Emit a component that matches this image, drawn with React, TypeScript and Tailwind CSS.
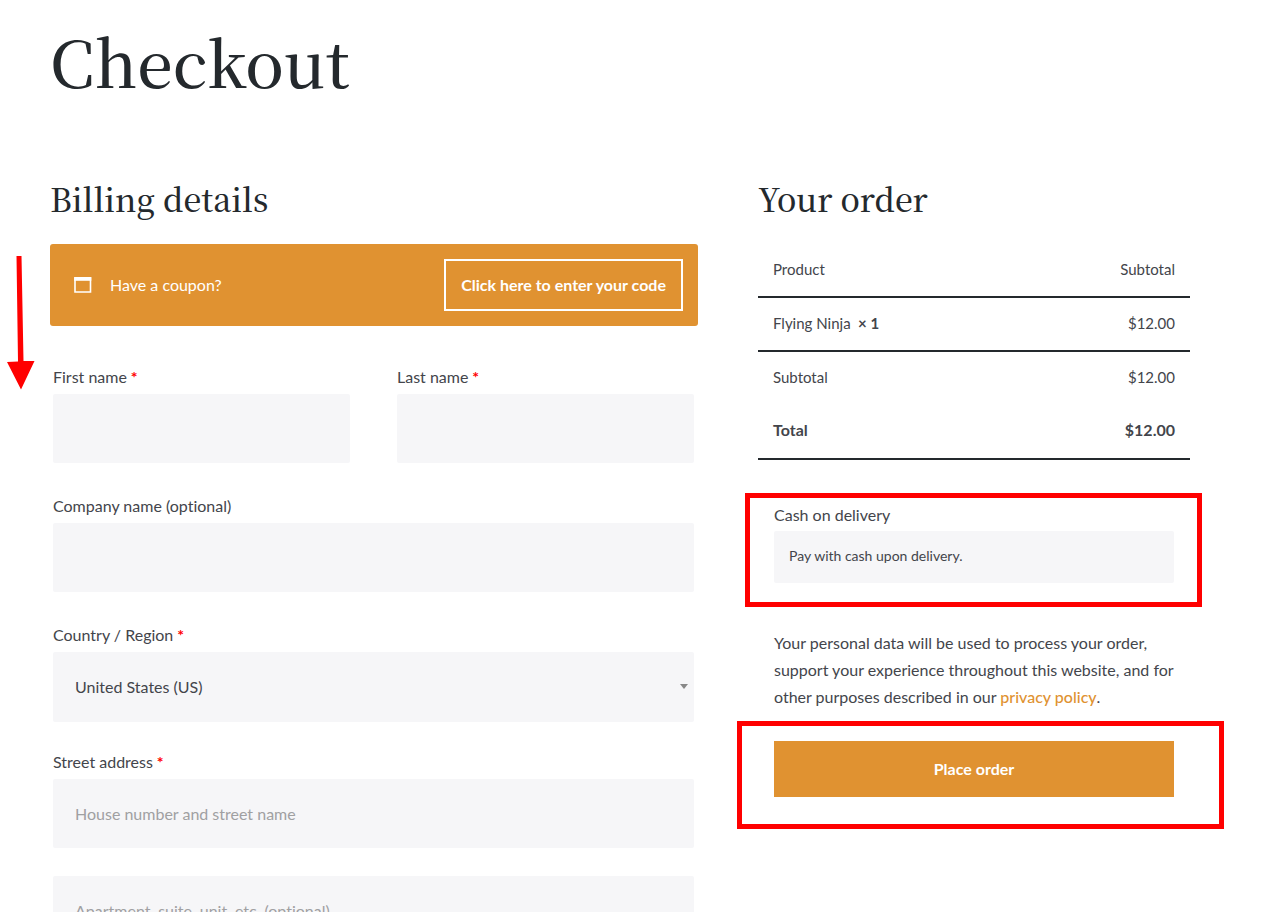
import type { ReactNode } from "react";

const inputClass =
  "block w-full rounded-xs bg-[#f6f6f8] px-[22px] text-base text-[#43454b] placeholder:text-[#a0a0a2] outline-none focus:ring-2 focus:ring-[#e09231]";

const headingClass =
  "font-['Source_Serif_Pro','Noto_Serif_CJK_SC','Liberation_Serif',serif] font-medium text-[#24292d]";

function Label({ id, required, children }: { id: string; required?: boolean; children: ReactNode }) {
  return (
    <label htmlFor={id} className="mb-1 block text-base leading-[26px]">
      {children}
      {required && <span className="font-bold text-[#ff0000]"> *</span>}
    </label>
  );
}

function Field({ id, label, required }: { id: string; label: string; required?: boolean }) {
  return (
    <div>
      <Label id={id} required={required}>{label}</Label>
      <input id={id} type="text" className={inputClass + " h-[69px]"} />
    </div>
  );
}

function CouponIcon() {
  return (
    <svg width="18" height="18" viewBox="0 0 18 18" fill="none" aria-hidden="true" className="shrink-0">
      <path d="M1 2h15.500v14H1z" stroke="white" strokeWidth="1.6" />
      <path d="M0.200 1h17.100v3.800H0.200z" fill="white" />
    </svg>
  );
}

function Arrow() {
  return (
    <svg width="30" height="136" viewBox="0 0 30 136" aria-hidden="true" className="pointer-events-none absolute top-[255px] left-1.5">
      <path d="M10.5 1h5l2 105h11L15 134.500 1 107l11-.5z" fill="#ff0000" />
    </svg>
  );
}

function Billing() {
  return (
    <section>
      <h2 className={headingClass + " text-[32px] leading-[50px]"}>Billing details</h2>
      <div className="mt-[21px] flex items-center gap-[18px] rounded-[3px] bg-[#e09231] py-[15px] pr-[15px] pl-6 text-white">
        <CouponIcon />
        <span className="grow text-base">Have a coupon?</span>
        <button type="button" className="h-[52px] border-2 border-white px-[15px] text-base font-bold">Click here to enter your code</button>
      </div>
      <form className="mt-[38px] mr-1 ml-[3px] flex flex-col gap-[30px]">
        <div className="grid grid-cols-2 gap-[47px]">
          <Field id="first" label="First name" required />
          <Field id="last" label="Last name" required />
        </div>
        <Field id="company" label="Company name (optional)" />
        <div>
          <Label id="country" required>Country / Region</Label>
          <div className="relative">
            <select id="country" className={inputClass + " h-[70px] appearance-none"}>
              <option>United States (US)</option>
            </select>
            <svg width="8" height="5" viewBox="0 0 8 5" aria-hidden="true" className="pointer-events-none absolute top-8 right-1.5">
              <path d="M0 0h8L4 5z" fill="#888" />
            </svg>
          </div>
        </div>
        <div className="-mt-[3px]">
          <Label id="street" required>Street address</Label>
          <input id="street" type="text" placeholder="House number and street name" className={inputClass + " h-[69px]"} />
        </div>
        <input id="unit" type="text" aria-label="Apartment, suite, unit, etc." placeholder="Apartment, suite, unit, etc. (optional)" className={inputClass + " -mt-0.5 h-[69px]"} />
      </form>
    </section>
  );
}

function Order() {
  return (
    <section>
      <h2 className={headingClass + " text-[32px] leading-[50px]"}>Your order</h2>
      <table className="mt-[21px] w-full border-separate border-spacing-0 text-[15px] leading-6 [&_td]:px-[15px] [&_td]:pt-[13px] [&_td]:pb-[15px] [&_td:last-child]:text-right [&_th]:px-[15px] [&_th]:pt-[13px] [&_th]:pb-[15px] [&_th:last-child]:text-right">
        <thead>
          <tr className="[&_th]:border-b-2 [&_th]:border-[#24292d]">
            <th scope="col" className="text-left font-normal">Product</th>
            <th scope="col" className="font-normal">Subtotal</th>
          </tr>
        </thead>
        <tbody>
          <tr className="[&_td]:border-b-2 [&_td]:border-[#24292d]">
            <td>Flying Ninja&nbsp;<strong className="font-bold"> × 1</strong></td>
            <td>$12.00</td>
          </tr>
        </tbody>
        <tfoot>
          <tr>
            <th scope="row" className="text-left font-normal">Subtotal</th>
            <td>$12.00</td>
          </tr>
          <tr className="text-base leading-[26px] [&_td]:border-b-2 [&_td]:border-[#24292d] [&_th]:border-b-2 [&_th]:border-[#24292d]">
            <th scope="row" className="text-left font-bold">Total</th>
            <td className="font-bold">$12.00</td>
          </tr>
        </tfoot>
      </table>
      <div className="mt-[42px] px-4">
        <div className="relative">
          <p className="text-base leading-[26px]">Cash on delivery</p>
          <p className="mt-[3px] rounded-xs bg-[#f6f6f8] px-[15px] pt-[13px] pb-[15px] text-sm leading-6">Pay with cash upon delivery.</p>
          <div className="pointer-events-none absolute -top-[9px] -right-7 -bottom-6 -left-[29px] border-[5px] border-[#ff0000]" />
        </div>
        <p className="mt-[46px] text-base leading-[27px]">
          Your personal data will be used to process your order, support your experience throughout this website, and for other purposes described in our{" "}
          <a href="#privacy" className="font-medium text-[#e09231]">privacy policy</a>.
        </p>
        <div className="relative mt-[31px]">
          <button type="submit" className="h-14 w-full bg-[#e09231] text-base font-bold text-white">Place order</button>
          <div className="pointer-events-none absolute -top-5 -right-[50px] -bottom-8 -left-[37px] border-[5px] border-[#ff0000]" />
        </div>
      </div>
    </section>
  );
}

export default function App() {
  return (
    <main className="relative bg-white pt-[18px] pr-[84px] pl-[50px] font-['Lato',sans-serif] text-[#43454b] [font-variant-ligatures:no-common-ligatures]">
      <Arrow />
      <h1 className={headingClass + " text-[64px] leading-[84px]"}>Checkout</h1>
      <div className="mt-[71px] grid grid-cols-[3fr_2fr] gap-[60px]">
        <Billing />
        <Order />
      </div>
    </main>
  );
}
